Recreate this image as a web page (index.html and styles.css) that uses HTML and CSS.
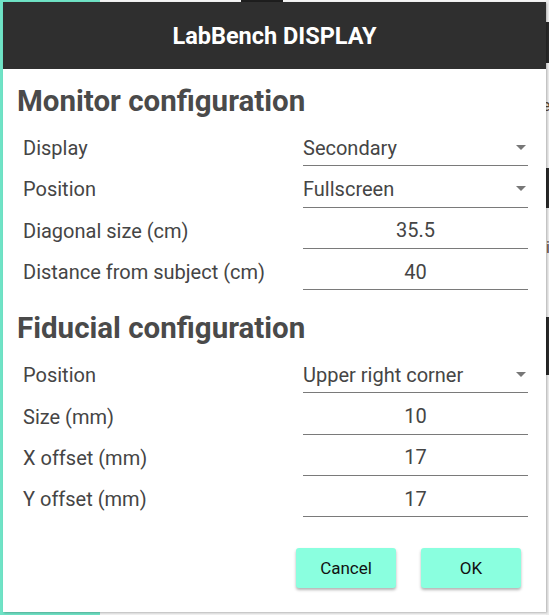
FILE: index.html
```html
<!DOCTYPE html>
<html>
<head>
<meta charset="utf-8">
<link rel="stylesheet" href="styles.css">
</head>
<body>
<div class="app">
  <div class="app-top">
    <div class="teal-tab"></div>
    <div class="top-block"></div>
  </div>
  <div class="side-right">
    <div class="blk b1"></div>
    <div class="txt t1">e</div>
    <div class="blk b2"></div>
    <div class="txt t2">i</div>
    <div class="blk b3"></div>
  </div>
  <div class="teal-left"></div>
  <div class="teal-bottom"></div>
</div>

<div class="dialog">
  <div class="dialog-header">LabBench DISPLAY</div>
  <div class="dialog-body">
    <h2 class="section-title">Monitor configuration</h2>
    <div class="form">
      <div class="label">Display</div>
      <div class="field select"><span>Secondary</span><i class="caret"></i></div>
      <div class="label">Position</div>
      <div class="field select"><span>Fullscreen</span><i class="caret"></i></div>
      <div class="label">Diagonal size (cm)</div>
      <div class="field num"><span>35.5</span></div>
      <div class="label">Distance from subject (cm)</div>
      <div class="field num"><span>40</span></div>
    </div>
    <h2 class="section-title second">Fiducial configuration</h2>
    <div class="form">
      <div class="label">Position</div>
      <div class="field select"><span>Upper right corner</span><i class="caret"></i></div>
      <div class="label">Size (mm)</div>
      <div class="field num"><span>10</span></div>
      <div class="label">X offset (mm)</div>
      <div class="field num"><span>17</span></div>
      <div class="label">Y offset (mm)</div>
      <div class="field num"><span>17</span></div>
    </div>
    <div class="actions">
      <button class="btn">Cancel</button>
      <button class="btn">OK</button>
    </div>
  </div>
</div>
</body>
</html>
```

FILE: styles.css
```css
html, body {
  margin: 0;
  padding: 0;
}
body {
  width: 549px;
  height: 615px;
  overflow: hidden;
  position: relative;
  background: #f2f2f2;
  font-family: Roboto, "Liberation Sans", sans-serif;
}
.app {
  position: absolute;
  inset: 0;
}
.app-top {
  height: 4px;
  display: flex;
  background: #f4f4f4;
}
.teal-tab {
  width: 100px;
  background: #6fe3c6;
}
.top-block {
  margin-left: 141px;
  width: 42px;
  background: #1e1e1e;
}
.teal-left {
  position: absolute;
  left: 0;
  top: 0;
  width: 3px;
  height: 615px;
  background: #6fe3c6;
}
.teal-bottom {
  position: absolute;
  left: 0;
  bottom: 0;
  width: 100px;
  height: 3px;
  background: #6fe3c6;
}
.side-right {
  position: absolute;
  left: 546px;
  top: 0;
  width: 3px;
  height: 615px;
  background: #ececec;
  overflow: hidden;
}
.blk {
  position: absolute;
  left: 0;
  width: 3px;
  background: #2a2a2a;
}
.b1 { top: 22px; height: 41px; }
.b2 { top: 168px; height: 40px; }
.b3 { top: 317px; height: 58px; }
.txt {
  position: absolute;
  left: -4px;
  font-size: 16px;
  color: #5a4a3a;
  line-height: 16px;
}
.t1 { top: 98px; }
.t2 { top: 240px; left: 0; }

.dialog {
  position: absolute;
  left: 3px;
  top: 2px;
  width: 543px;
  height: 610px;
  background: #fff;
  box-shadow: 1px 1px 2px rgba(0,0,0,0.25);
  display: flex;
  flex-direction: column;
}
.dialog-header {
  height: 67px;
  background: #2f2f2f;
  color: #fff;
  font-weight: 700;
  font-size: 23.5px;
  display: flex;
  align-items: center;
  justify-content: center;
}
.dialog-body {
  flex: 1;
  padding: 0 18px 0 14px;
  display: flex;
  flex-direction: column;
  color: #454545;
}
.section-title {
  margin: 15px 0 0 0;
  font-size: 29.5px;
  font-weight: 700;
  line-height: 34px;
  color: #4a4a4a;
}
.section-title.second {
  margin-top: 21px;
}
.form {
  display: grid;
  grid-template-columns: 286px 1fr;
  grid-auto-rows: 41.3px;
  margin-top: 7px;
}
.label {
  padding-left: 6px;
  padding-top: 5px;
  font-size: 20px;
  display: flex;
  align-items: center;
  color: #454545;
}
.field {
  border-bottom: 1px solid #7a7a7a;
  font-size: 20px;
  display: flex;
  align-items: center;
  padding-top: 5px;
  color: #454545;
  position: relative;
}
.field.num {
  justify-content: center;
}
.field.select {
  justify-content: space-between;
}
.caret {
  width: 0;
  height: 0;
  border-left: 5px solid transparent;
  border-right: 5px solid transparent;
  border-top: 5px solid #777;
  margin-right: 2px;
}
.actions {
  display: flex;
  justify-content: flex-end;
  gap: 25px;
  margin-top: auto;
  margin-bottom: 24px;
  padding-right: 7px;
}
.btn {
  width: 100px;
  height: 40px;
  border: none;
  border-radius: 3px;
  background: #8affdf;
  color: #111;
  font-family: Roboto, "Liberation Sans", sans-serif;
  font-size: 17px;
  box-shadow: 0 2px 3px rgba(0,0,0,0.3);
}
```
